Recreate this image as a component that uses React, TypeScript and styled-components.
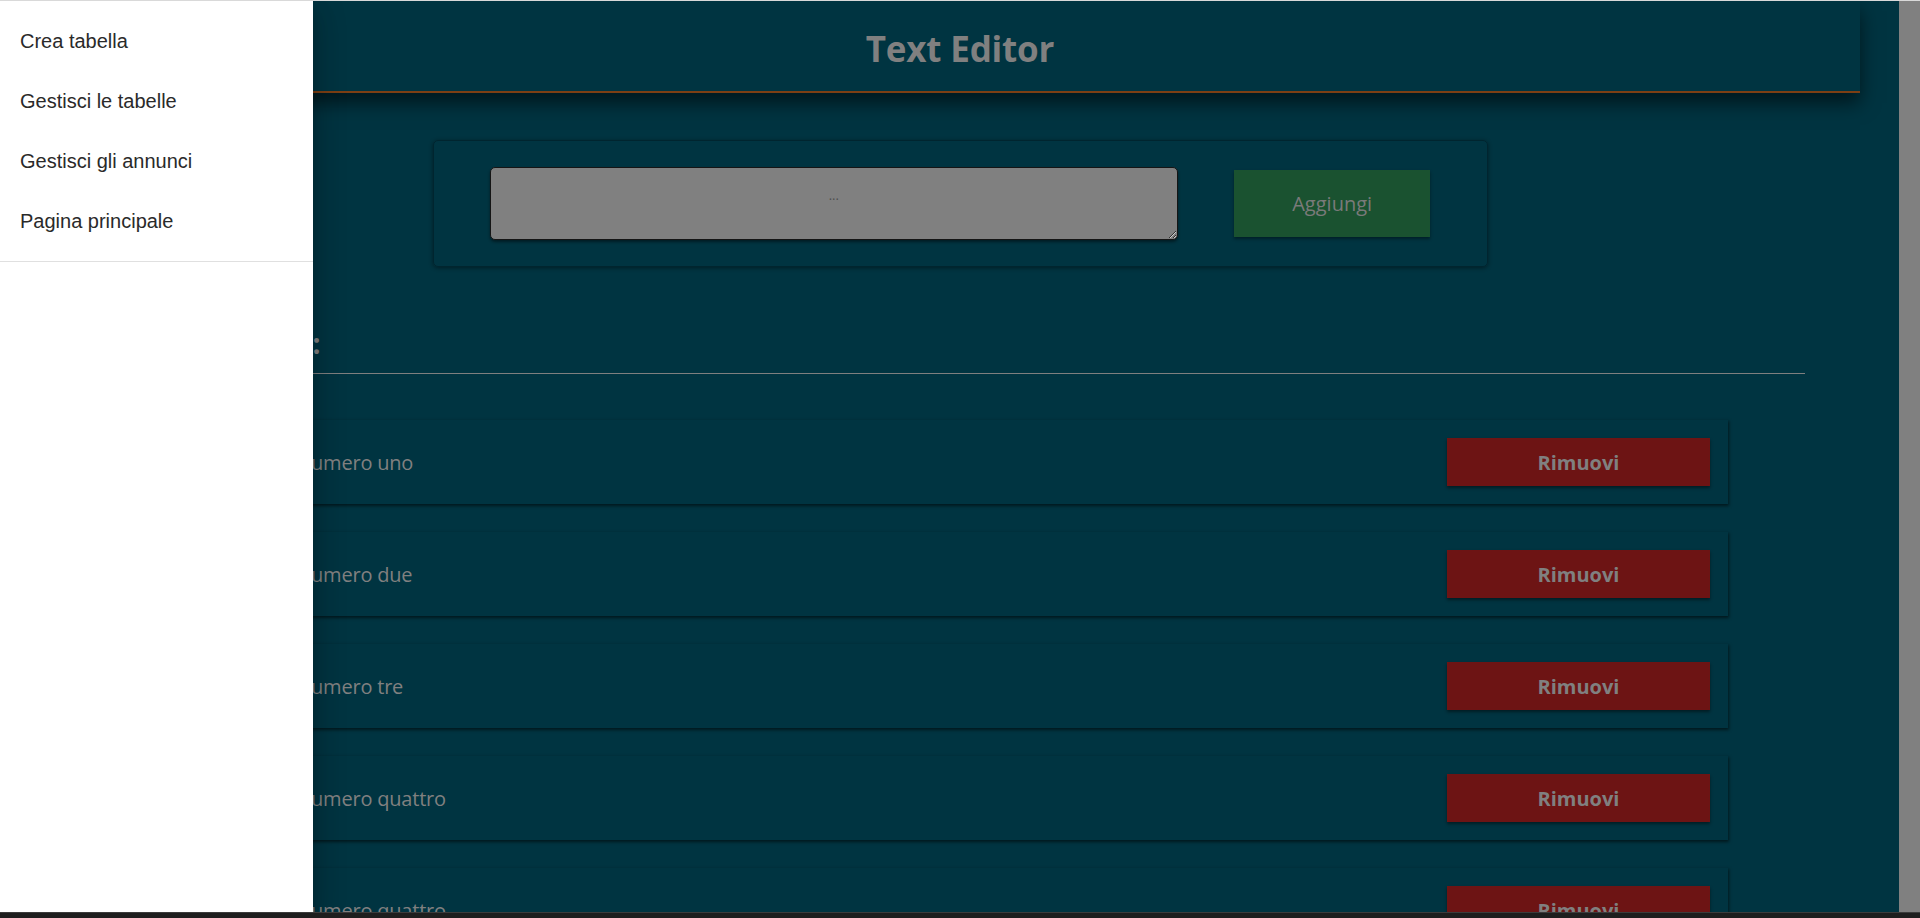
import React from "react";
import styled, { createGlobalStyle } from "styled-components";

const GlobalStyle = createGlobalStyle`
  html, body { margin: 0; padding: 0; height: 100%; overflow: hidden; background: #003441; }
  #root { height: 100%; }
  * { box-sizing: border-box; }
`;

const Shell = styled.div`
  height: 918px;
  display: flex;
  flex-direction: column;
  background: #003441;
`;

const TopLine = styled.div`
  height: 1px;
  flex: none;
  background: #d9d9d9;
`;

const Viewport = styled.div`
  position: relative;
  flex: 1;
  overflow: hidden;
  background: #003441;
`;

const Taskbar = styled.div`
  height: 6px;
  flex: none;
  background: #1e1e1e;
  border-top: 1px solid #3c3c3c;
`;

const Page = styled.main`
  display: flex;
  flex-direction: column;
  align-items: center;
  font-family: "Open Sans", "Noto Sans", sans-serif;
  color: #808080;
`;

const Header = styled.header`
  width: 1800px;
  height: 92px;
  flex: none;
  display: flex;
  align-items: center;
  justify-content: center;
  padding-top: 4px;
  background: #003441;
  border-bottom: 2px solid #7d3f14;
  box-shadow: 0 10px 18px rgba(0, 0, 0, 0.55);
`;

const Title = styled.h1`
  margin: 0;
  font-size: 35px;
  font-weight: 700;
  color: #808080;
  letter-spacing: -0.2px;
`;

const FormBox = styled.section`
  margin-top: 47px;
  width: 1055px;
  height: 127px;
  display: flex;
  align-items: center;
  justify-content: space-evenly;
  border-radius: 5px;
  border: 1px solid #00252f;
  box-shadow: 0 1px 4px rgba(0, 0, 0, 0.45);
`;

const TextInput = styled.textarea`
  width: 688px;
  height: 73px;
  background: #808080;
  border: 1px solid #151515;
  border-radius: 5px;
  box-shadow: 0 2px 3px rgba(0, 0, 0, 0.45);
  text-align: center;
  font-family: "Open Sans", sans-serif;
  font-size: 13px;
  padding: 18px 10px 0;
  color: #333;
  outline: none;
  &::placeholder { color: #4f4f4f; }
`;

const AddButton = styled.button`
  width: 196px;
  height: 67px;
  border: none;
  background: #1a5230;
  color: #7a7a7a;
  font-family: "Open Sans", sans-serif;
  font-size: 20px;
  box-shadow: 0 2px 3px rgba(0, 0, 0, 0.4);
  cursor: pointer;
`;

const ListSection = styled.section`
  margin-top: 58px;
  width: 1690px;
`;

const SectionTitle = styled.h3`
  margin: 0 0 12px;
  padding-left: 30px;
  font-size: 28px;
  font-weight: 700;
  line-height: 36px;
  color: #808080;
`;

const Rule = styled.hr`
  margin: 0;
  border: none;
  height: 1px;
  background: #7f7f7f;
`;

const List = styled.ul`
  margin: 45px 0 0;
  padding: 0;
  list-style: none;
  width: 1536px;
  display: flex;
  flex-direction: column;
  gap: 27px;
`;

const Card = styled.li`
  height: 85px;
  display: flex;
  align-items: center;
  justify-content: space-between;
  padding: 0 18px 0 52px;
  background: #003441;
  border-top: 1px solid #00303c;
  box-shadow: 1px 2px 3px rgba(0, 0, 0, 0.55);
`;

const CardText = styled.span`
  font-size: 20px;
  letter-spacing: -0.2px;
  color: #808080;
`;

const RemoveButton = styled.button`
  width: 263px;
  height: 48px;
  border: none;
  background: #6d1414;
  color: #808080;
  font-family: "Open Sans", sans-serif;
  font-size: 20px;
  font-weight: 700;
  box-shadow: 0 2px 3px rgba(0, 0, 0, 0.45);
  cursor: pointer;
`;

const Drawer = styled.nav`
  position: absolute;
  left: 0;
  top: 0;
  bottom: 0;
  width: 313px;
  background: #ffffff;
  box-shadow: 0 8px 10px -5px rgba(0, 0, 0, 0.2), 0 16px 24px 2px rgba(0, 0, 0, 0.14),
    0 6px 30px 5px rgba(0, 0, 0, 0.12);
  font-family: "Liberation Sans", Arial, sans-serif;
`;

const MenuList = styled.ul`
  margin: 0;
  padding: 10px 0;
  list-style: none;
  border-bottom: 1px solid #e0e0e0;
`;

const MenuItem = styled.li`
  height: 60px;
  display: flex;
  align-items: center;
  padding: 0 20px;
  font-size: 20px;
  line-height: 30px;
  color: #2a2a2a;
  cursor: pointer;
`;

const Scrollbar = styled.div`
  position: absolute;
  top: 0;
  right: 0;
  bottom: 0;
  width: 21px;
  background: #808080;
`;

const items = [
  "Testo numero uno",
  "Testo numero due",
  "Testo numero tre",
  "Testo numero quattro",
  "Testo numero quattro",
];

const menu = ["Crea tabella", "Gestisci le tabelle", "Gestisci gli annunci", "Pagina principale"];

export default function App() {
  return (
    <>
      <GlobalStyle />
      <Shell>
        <TopLine />
        <Viewport>
          <Page>
            <Header>
              <Title>Text Editor</Title>
            </Header>
            <FormBox>
              <TextInput placeholder="..." />
              <AddButton>Aggiungi</AddButton>
            </FormBox>
            <ListSection>
              <SectionTitle>Testi salvati:</SectionTitle>
              <Rule />
            </ListSection>
            <List>
              {items.map((t, i) => (
                <Card key={i}>
                  <CardText>{t}</CardText>
                  <RemoveButton>Rimuovi</RemoveButton>
                </Card>
              ))}
            </List>
          </Page>
          <Drawer>
            <MenuList>
              {menu.map((m) => (
                <MenuItem key={m}>{m}</MenuItem>
              ))}
            </MenuList>
          </Drawer>
          <Scrollbar />
        </Viewport>
        <Taskbar />
      </Shell>
    </>
  );
}
